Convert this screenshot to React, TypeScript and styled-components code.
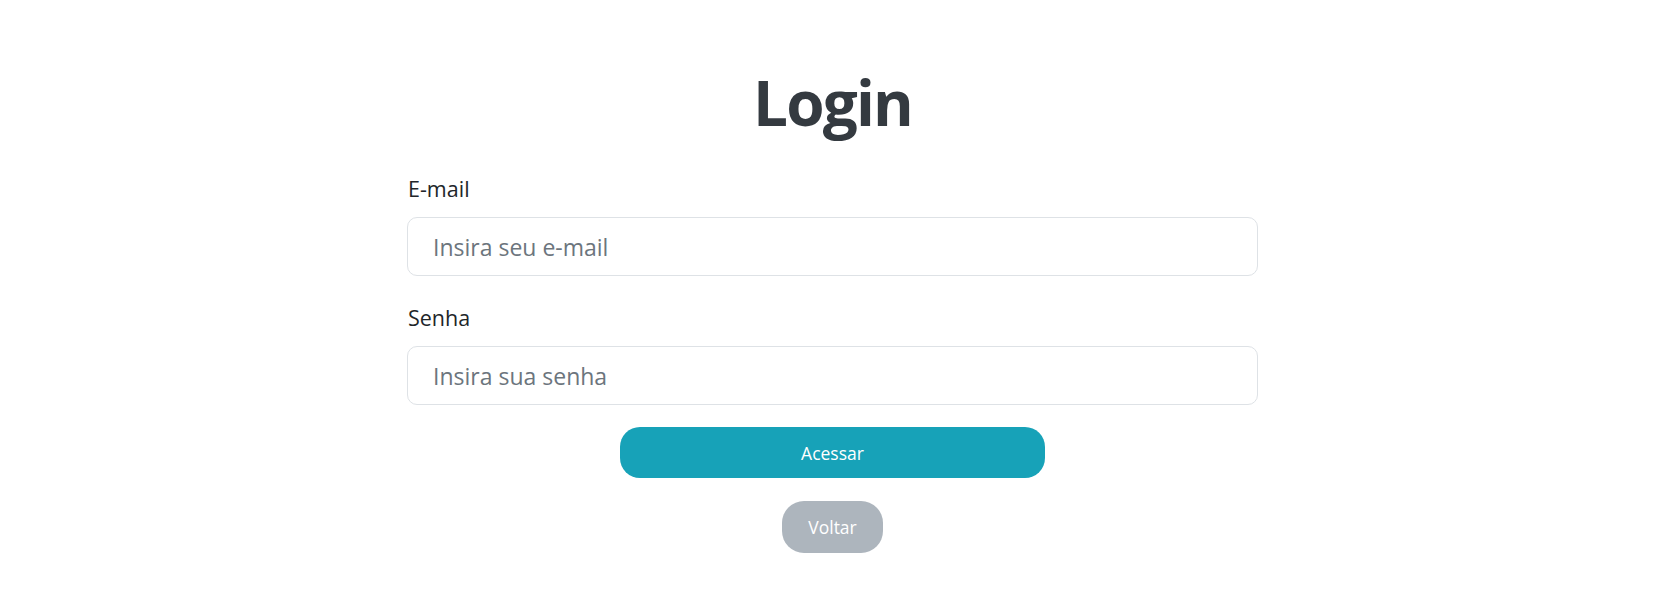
import React from "react";
import styled, { createGlobalStyle } from "styled-components";

const GlobalStyle = createGlobalStyle`
  html, body {
    margin: 0;
    padding: 0;
    background: #ffffff;
  }
  body {
    font-family: "Open Sans", "Noto Sans", "Liberation Sans", sans-serif;
    color: #212529;
  }
  * { box-sizing: border-box; }
`;

const Page = styled.main`
  display: flex;
  flex-direction: column;
  align-items: center;
  padding: 64px 0 0 4px;
`;

const Title = styled.h1`
  margin: 0 0 31px;
  font-size: 62px;
  line-height: 77px;
  font-weight: 700;
  color: #343a40;
  letter-spacing: -1.8px;
`;

const Form = styled.form`
  width: 851px;
  display: flex;
  flex-direction: column;
  align-items: stretch;
`;

const Field = styled.div<{ $spacing: number }>`
  display: flex;
  flex-direction: column;
  margin-bottom: ${(p) => p.$spacing}px;
`;

const Label = styled.label`
  font-size: 21.5px;
  line-height: 33px;
  color: #212529;
  margin-bottom: 12px;
  padding-left: 1px;
`;

const Input = styled.input`
  height: 59px;
  border: 1px solid #dee2e6;
  border-radius: 10px;
  padding: 0 25px;
  font-family: inherit;
  font-size: 23px;
  color: #212529;
  background: #fff;
  outline: none;
  &::placeholder { color: #6c757d; opacity: 1; }
`;

const Actions = styled.div`
  display: flex;
  flex-direction: column;
  align-items: center;
  gap: 23px;
`;

const Button = styled.button<{ $variant: "info" | "muted"; $wide?: boolean }>`
  border: none;
  font-family: inherit;
  font-size: 17.5px;
  color: #ffffff;
  cursor: pointer;
  height: ${(p) => (p.$wide ? "51px" : "52px")};
  width: ${(p) => (p.$wide ? "425px" : "auto")};
  padding: ${(p) => (p.$wide ? "0" : "0 26px")};
  border-radius: ${(p) => (p.$wide ? "20px" : "22px")};
  background: ${(p) => (p.$variant === "info" ? "#17a2b8" : "#adb5bd")};
`;

export default function App() {
  return (
    <>
      <GlobalStyle />
      <Page>
        <Title>Login</Title>
        <Form onSubmit={(e) => e.preventDefault()}>
          <Field $spacing={25}>
            <Label htmlFor="email">E-mail</Label>
            <Input id="email" type="email" placeholder="Insira seu e-mail" />
          </Field>
          <Field $spacing={22}>
            <Label htmlFor="senha">Senha</Label>
            <Input id="senha" type="password" placeholder="Insira sua senha" />
          </Field>
          <Actions>
            <Button type="submit" $variant="info" $wide>
              Acessar
            </Button>
            <Button type="button" $variant="muted">
              Voltar
            </Button>
          </Actions>
        </Form>
      </Page>
    </>
  );
}
